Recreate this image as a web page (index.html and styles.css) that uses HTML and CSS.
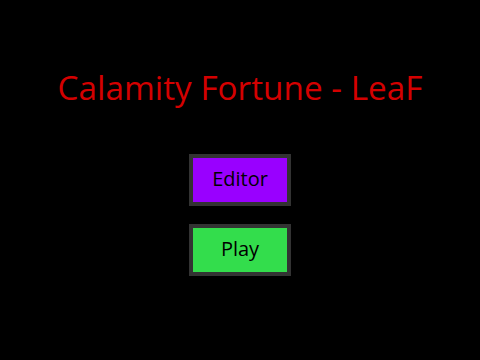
FILE: index.html
```html
<!DOCTYPE html>
<html lang="en">

<head>
    <meta charset="UTF-8">
    <meta name="viewport" content="width=device-width, initial-scale=1.0">
    <title>Calamity Fortune - LeaF</title>
    <link rel="stylesheet" href="styles.css">
</head>

<body>
    <div class="menu">
        <h1 class="title">Calamity Fortune - LeaF</h1>
        <div class="menu-buttons">
            <button class="btn btn-editor">Editor</button>
            <button class="btn btn-play">Play</button>
        </div>
    </div>
</body>

</html>
```

FILE: styles.css
```css
* {
    margin: 0;
    padding: 0;
    box-sizing: border-box;
    font-family: "Open Sans", "Noto Sans", sans-serif;
}

html,
body {
    width: 100%;
    height: 100%;
    background-color: #000;
}

.menu {
    display: flex;
    flex-direction: column;
    align-items: center;
    padding-top: 65px;
}

.title {
    color: #d40000;
    font-size: 33.3px;
    font-weight: normal;
    line-height: 44px;
    margin-bottom: 45px;
}

.menu-buttons {
    display: flex;
    flex-direction: column;
    gap: 18px;
}

.btn {
    width: 102px;
    height: 52px;
    border: 4px solid #333;
    padding-bottom: 4px;
    color: #000;
    font-size: 20px;
    cursor: pointer;
}

.btn-editor {
    background-color: #9900ff;
}

.btn-play {
    background-color: #33dd4c;
}
```
